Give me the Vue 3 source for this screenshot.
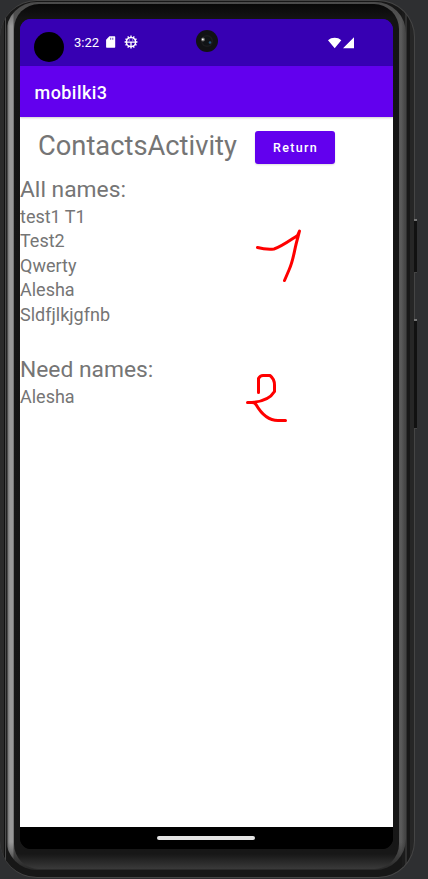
<script setup>
const allNames = ['test1 T1', 'Test2', 'Qwerty', 'Alesha', 'Sldfjlkjgfnb']
const needNames = ['Alesha']
const teeth = [0, 30, 60, 90, 120, 150, 180, 210, 240, 270, 300, 330]
</script>

<template>
  <div class="desk">
    <div class="shell">
      <div class="metal">
        <div class="bezel">
          <div class="screen">
            <header class="status">
              <span class="cutout"></span>
              <span class="clock">3:22</span>
              <svg class="sd" width="10" height="12" viewBox="0 0 10 12">
                <path fill="#fff" d="M3.4.3H8.600a.6.6 0 0 1 .6.6v10.200a.6.6 0 0 1-.6.6H.7a.6.6 0 0 1-.6-.6V3.700Z" />
                <path fill="#3700b3" opacity=".75" d="M4.200 1.800h1v2h-1zM6.300 1.800h1v2h-1z" />
              </svg>
              <svg class="gear" width="14" height="14" viewBox="0 0 14 14">
                <g stroke="#fff" fill="none">
                  <circle cx="7" cy="7" r="4.600" stroke-width="1.500" />
                  <path v-for="t in teeth" :key="t" d="M7 .6v1.800" stroke-width="1.400" :transform="`rotate(${t} 7 7)`" />
                  <path d="M2.500 7.200h9M7 7v4.500" stroke-width="1.300" />
                </g>
                <path fill="#fff" d="M4.800 4.600h1v1h-1zM8.200 4.600h1v1h-1z" />
              </svg>
              <svg class="signal" width="27" height="12" viewBox="0 0 27 12">
                <path fill="#fff" d="M0 3.200C3.600-.1 9.800-.1 13.300 3.200L6.700 11.300ZM26 .3V11.300H15Z" />
              </svg>
            </header>
            <div class="appbar">mobilki3</div>
            <main class="content">
              <div class="heading">
                <h1>ContactsActivity</h1>
                <button>Return</button>
              </div>
              <section class="all">
                <h2>All names:</h2>
                <p v-for="name in allNames" :key="name">{{ name }}</p>
              </section>
              <section class="need">
                <h2>Need names:</h2>
                <p v-for="name in needNames" :key="name">{{ name }}</p>
              </section>
            </main>
            <footer class="nav"><span class="pill"></span></footer>
          </div>
        </div>
      </div>
    </div>
    <span class="key power"></span>
    <span class="key volume"></span>
    <svg class="lens" width="24" height="24" viewBox="0 0 24 24">
      <circle cx="12" cy="12" r="11" fill="#111214" />
      <circle cx="12" cy="12" r="6" fill="#1b1c1f" />
      <circle cx="12" cy="12" r="4.600" fill="#101315" />
      <circle cx="8" cy="10.500" r="2" fill="#666" />
      <circle cx="7.800" cy="10.400" r=".9" fill="#fff" />
      <circle cx="15" cy="13.500" r="1.300" fill="#245477" />
    </svg>
    <svg class="ink" width="428" height="879" viewBox="0 0 428 879">
      <g fill="none" stroke="#f00" stroke-width="3" stroke-linecap="round" stroke-linejoin="round">
        <path d="M257.500 247.500C263 249 268 249.500 274 249C281 247 289 241 297.500 235.500L299.500 231L298 237C294 250 294 259 289 270L284.500 280.500" />
        <path d="M258.500 392.500V378.500Q260 375.500 263 375.500H270Q274.500 379 274.500 385V391.500C270 399 262 402.500 247.500 402.500H252Q254.500 402.500 256 404.500C262 415 270 420.500 278 420.500H285.500" />
      </g>
    </svg>
  </div>
</template>

<style>
body {
  margin: 0;
  background: #2e2f31;
}
</style>

<style scoped>
.desk {
  position: relative;
  width: 428px;
  height: 879px;
  overflow: hidden;
  background: #2e2f31;
  font-family: Roboto, sans-serif;
}
.shell {
  box-sizing: border-box;
  width: 415px;
  height: 878px;
  padding: 1px 8px 7px 6px;
  border: 1px solid #454545;
  border-width: 1px 1px 1px 0;
  border-radius: 37px;
  background: linear-gradient(90deg, #2b2b2b 0 4px, #111 4px 5px, #4a4a4a 5px 6px, #171717 6px 402px, #1b1b1b 402px 405px, #303030 405px 407px, #171717 407px 410px, #262626 410px);
}
.metal {
  box-sizing: border-box;
  width: 400px;
  height: 868px;
  padding: 2px 7px 1px 8px;
  border-radius: 31px;
  background:
    linear-gradient(180deg, #4a4a4a 0, transparent 24px, transparent 840px, #2a2a2a 866px),
    linear-gradient(90deg, #222 0 1px, #777 2px, #999 4px 7px, #555 8px 392px, #5b5b5b 395px, #454545 399px);
}
.bezel {
  box-sizing: border-box;
  width: 385px;
  height: 865px;
  padding: 15px 6px 0;
  border-radius: 25px;
  background: linear-gradient(180deg, #080808 0, #141414 15px, #171717 850px, #3a3a3a 865px);
}
.screen {
  display: flex;
  flex-direction: column;
  width: 373px;
  height: 830px;
  overflow: hidden;
  border-radius: 11px;
  background: linear-gradient(#3700b3 0 30px, #fff 30px 808px, #000 808px);
}
.status {
  display: flex;
  flex: none;
  align-items: flex-start;
  box-sizing: border-box;
  height: 47px;
  padding-left: 14px;
  background: #3700b3;
  color: #fff;
}
.cutout {
  width: 30px;
  height: 30px;
  margin-top: 13px;
  border-radius: 50%;
  background: #000;
}
.clock {
  width: 32px;
  margin: 16px 0 0 10px;
  font-size: 13px;
  line-height: 16px;
}
.sd {
  margin-top: 17px;
}
.gear {
  margin: 16px 0 0 8px;
}
.signal {
  margin: 18px 0 0 190px;
}
.appbar {
  z-index: 1;
  flex: none;
  height: 51px;
  padding-left: 14.500px;
  background: #6200ee;
  box-shadow: 0 1px 2px #0003;
  color: #fff;
  font-size: 18px;
  font-weight: 500;
  line-height: 53px;
  letter-spacing: 0.45px;
}
.content {
  flex: 1;
  color: #757575;
}
.heading {
  display: flex;
  height: 59px;
  padding-left: 18px;
}
h1, h2, p {
  margin: 0;
  font-weight: 400;
  white-space: nowrap;
}
h1 {
  width: 217px;
  padding-top: 12px;
  font-size: 27.300px;
  line-height: 34px;
}
button {
  width: 80px;
  height: 33px;
  margin-top: 14px;
  padding: 0 0 0 1px;
  border: 0;
  border-radius: 3px;
  background: #6200ee;
  box-shadow: 0 1px 2px #0002;
  color: #fff;
  font: 500 12.500px/34px Roboto, sans-serif;
  letter-spacing: 1.300px;
}
.all {
  height: 180px;
}
h2 {
  height: 28.500px;
  font-size: 22.800px;
  line-height: 28.500px;
}
p {
  height: 24.500px;
  font-size: 18px;
  line-height: 24.500px;
}
.nav {
  display: flex;
  flex: none;
  align-items: center;
  justify-content: center;
  height: 22px;
  background: #000;
}
.pill {
  width: 98px;
  height: 4px;
  margin-right: 1px;
  border-radius: 2px;
  background: #e5e5e5;
}
.lens, .ink, .key {
  position: absolute;
}
.lens {
  top: 29px;
  left: 195px;
}
.ink {
  top: 0;
  left: 0;
}
.key {
  left: 414px;
  width: 3px;
  box-sizing: border-box;
  border-top: 2px solid #777;
  border-bottom: 1px solid #444;
  background: #111;
}
.power {
  top: 219px;
  height: 54px;
}
.volume {
  top: 319px;
  height: 110px;
}
</style>
